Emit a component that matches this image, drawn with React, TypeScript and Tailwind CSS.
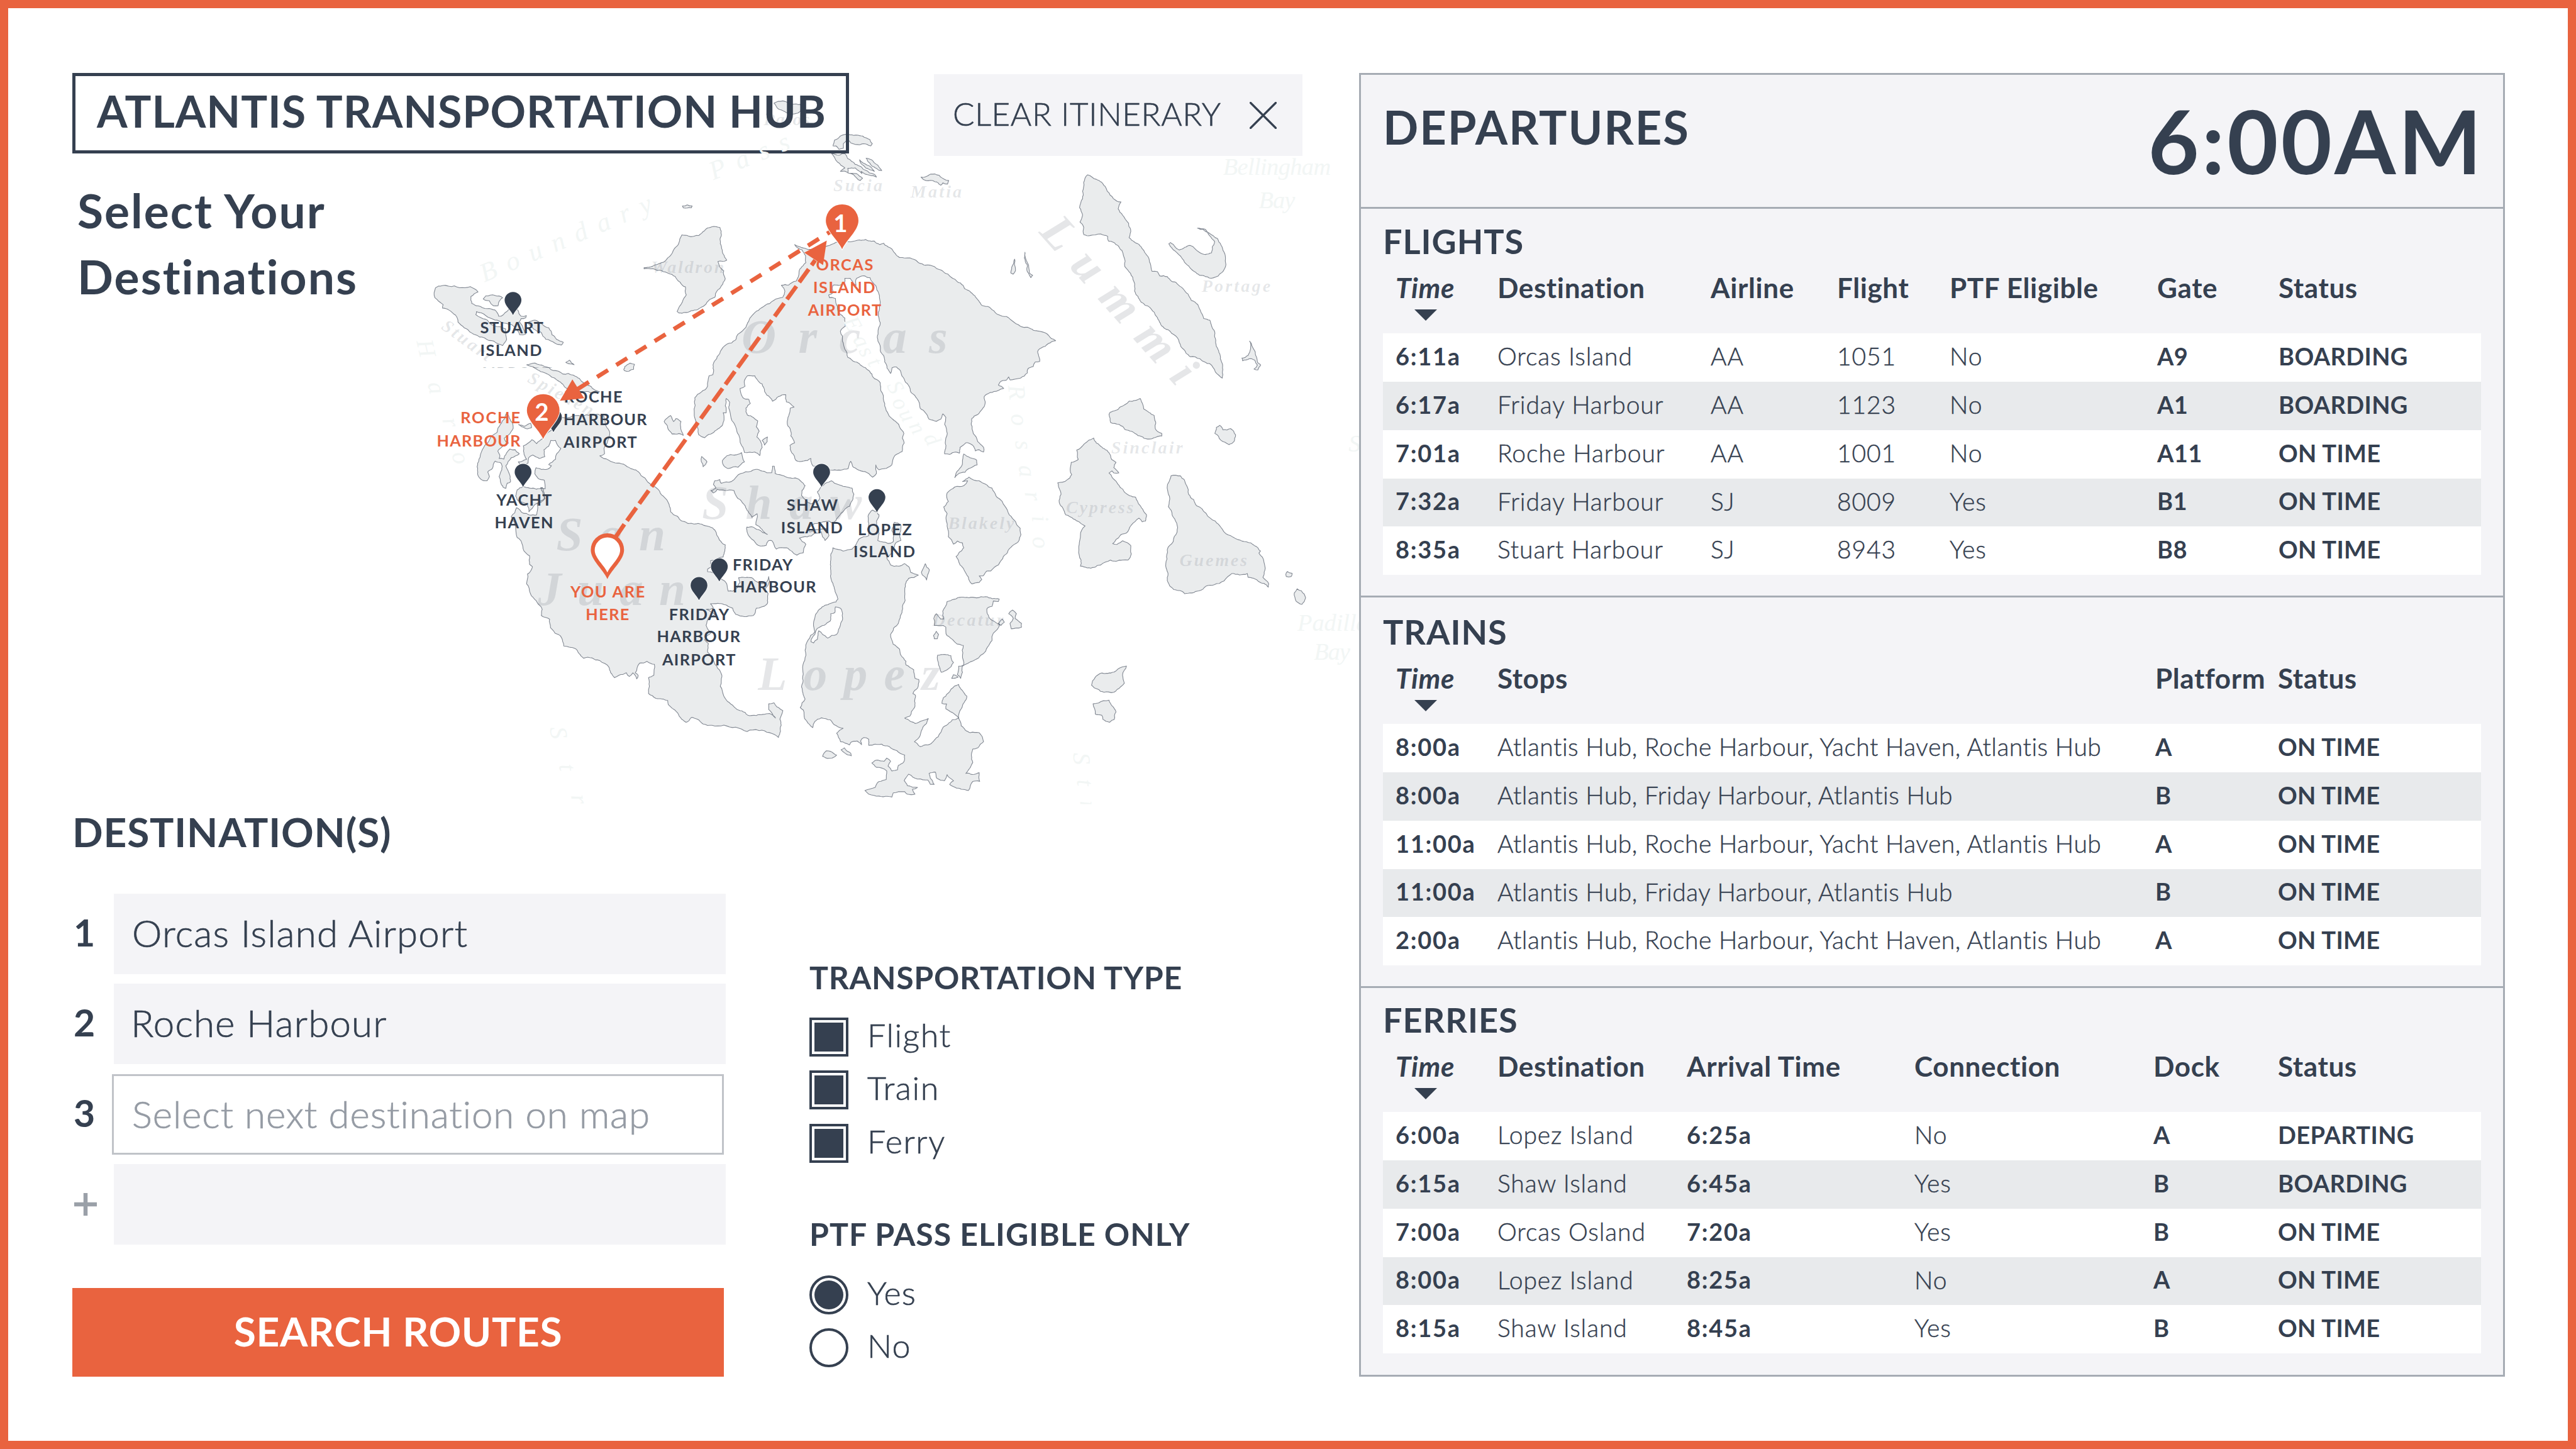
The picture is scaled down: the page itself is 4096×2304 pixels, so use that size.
import React from "react";

/* ------------------------------------------------------------------ */
/* Map geometry                                                        */
/* ------------------------------------------------------------------ */

type Sheet = { x: number; y: number; sx: number; sy: number; shapes: string[] };

// Coastlines are stored per chart sheet; each sheet has its own origin and scale.
const SHEETS: Sheet[] = [
  {
    x: 1000, y: 300, sx: 0.7653, sy: 0.57398,
    shapes: [
      "107,722 150,715 220,717 245,740 222,760 225,790 245,800 275,812 300,818 312,845 320,845 345,815 372,815 380,838 385,845 402,842 400,852 385,855 378,870 390,890 400,922 380,925 372,905 355,882 330,875 300,862 270,842 240,825 238,838 270,858 290,882 335,900 335,925 338,945 325,972 312,965 280,950 250,935 225,918 200,895 180,870 172,840 150,818 130,810 132,795 105,765",
      "262,770 270,757 300,755 325,765 312,785 310,800 295,800 282,778",
      "410,870 430,862 450,875 475,895 485,925 500,945 522,958 515,970 495,962 465,945 450,915 425,900 410,880",
      "403,1055 430,1048 460,1062 490,1080 520,1095 555,1100 590,1135 625,1165 640,1172 590,1172 560,1168 530,1155 500,1120 470,1095 430,1070",
      "530,1045 542,1035 557,1055 545,1052",
      "718,1075 722,1062 738,1048 753,1053 750,1075 735,1083 720,1080",
    ],
  },
  {
    x: 1600, y: 250, sx: 0.73342, sy: 0.57398,
    shapes: [
      "510,622 540,637 580,637 620,628 650,612 672,607 700,610 730,602 750,600 760,606 780,607 798,622 812,616 826,632 840,642 865,678 885,680 915,686 960,710 990,725 1010,735 1045,768 1080,798 1085,812 1120,843 1145,886 1170,893 1200,925 1250,955 1300,980 1340,997 1370,1015 1394,1038 1375,1048 1340,1073 1333,1085 1338,1110 1340,1128 1325,1130 1318,1150 1300,1160 1298,1178 1275,1200 1240,1208 1235,1195 1228,1208 1205,1218 1200,1230 1218,1245 1185,1258 1160,1270 1152,1280 1155,1310 1145,1335 1110,1375 1108,1400 1115,1440 1130,1475 1150,1500 1150,1520 1135,1510 1122,1515 1112,1490 1090,1480 1070,1500 1068,1525 1055,1520 1035,1530 1018,1528 1020,1480 1027,1440 1018,1400 1022,1370 1012,1355 1005,1378 990,1387 965,1378 935,1330 925,1290 895,1230 870,1175 855,1152 840,1155 835,1180 815,1130 800,1080 792,1040 795,980 800,960 793,930 800,870 785,800 765,765 745,757 720,768 718,800 705,780 698,768 680,768 678,790 640,798 640,830 625,840 628,852 648,855 655,890 662,920 680,940 682,975 665,998 672,1040 680,1075 690,1110 715,1130 750,1155 775,1195 800,1220 802,1255 812,1300 820,1340 835,1370 865,1410 880,1440 875,1460 881,1481 874,1518 850,1534 839,1576 813,1592 796,1597 785,1576 787,1613 774,1629 761,1613 735,1602 709,1586 700,1560 691,1592 639,1599 573,1581 565,1548 515,1557 500,1523 494,1491 510,1480 497,1450 495,1420 485,1395 495,1330 508,1325 495,1310 482,1303 480,1272 455,1280 435,1300 405,1240 400,1225 388,1215 375,1190 350,1190 340,1210 342,1235 325,1245 335,1285 355,1292 360,1310 345,1330 350,1360 370,1370 385,1385 380,1410 390,1430 382,1455 395,1475 400,1500 392,1535 375,1520 340,1522 335,1500 325,1470 310,1410 295,1375 287,1330 290,1305 278,1288 275,1320 278,1350 268,1350 265,1405 245,1425 205,1458 185,1445 175,1400 170,1350 172,1285 215,1235 220,1190 233,1185 237,1130 258,1085 310,1035 318,1010 345,980 365,930 410,885 470,850 477,825 465,798 490,797 515,780 525,740 548,700 547,670 535,645",
      "0,722 45,708 80,680 110,630 128,580 150,585 185,583 215,550 257,548 262,580 262,630 280,690 250,695 255,715 270,735 275,770 262,800 240,850 200,890 160,908 118,918 112,912 130,870 143,840 140,805 105,760 60,735 0,727",
      "130,455 146,450 163,455 160,463 133,463",
      "440,10 455,35 490,58 530,45 530,15 500,15 470,0",
      "640,195 645,170 665,152 700,147 740,152 765,168 773,185 768,195 755,188 730,190 700,182 688,168 675,185 675,205 660,210 650,195",
      "635,228 660,235 680,228 690,250 715,275 750,300 780,318 787,330 765,322 735,305 738,315 715,290 690,292 690,312 720,315 740,335 732,345 710,320 665,305 680,290 655,265 645,245",
      "752,248 775,260 805,302 795,300 765,270",
      "730,255 755,278 780,305 750,290 735,272",
      "938,330 960,325 970,317 1000,322 1015,338 1032,345 1028,360 1012,355 1005,365 985,350 955,345",
      "1255,685 1245,720 1242,745 1250,750 1258,735 1255,700",
      "1290,655 1288,680 1298,740 1310,765 1316,755 1305,745 1298,700",
      "68,1388 90,1362 100,1388 108,1375 125,1388 133,1448 118,1440 95,1442 80,1415",
      "400,1470 418,1455 417,1475 408,1490",
    ],
  },
  {
    x: 1180, y: 700, sx: 0.33333, sy: 0.33333,
    shapes: [
      "235,980 260,1020 280,1050 285,1090 250,1140 218,1165 230,1190 250,1200 220,1215 190,1240 170,1260 185,1290 180,1315 215,1320 235,1275 260,1245 300,1250 330,1280 270,1310 230,1370 260,1440 265,1490 240,1500 230,1538 210,1530 190,1490 180,1450 200,1400 195,1350 150,1335 130,1390 95,1415 108,1450 90,1482 60,1480 30,1455 20,1350 40,1290 75,1215 120,1150 165,1120 190,1060 220,1020",
      "325,1062 370,1075 415,1053 422,1085 390,1095 350,1080",
    ],
  },
  {
    x: 1050, y: 1050, sx: 0.73342, sy: 0.60587,
    shapes: [
      "434,72 450,72 468,105 450,149 427,171 436,176 423,190 384,184 380,209 391,228 412,235 415,270 400,265 412,310 388,330 385,378 340,370 318,348 300,385 315,430 320,470 335,490 340,515 362,545 362,580 372,590 355,620 352,660 365,700 385,730 405,765 402,790 430,805 433,840 448,862 470,880 478,915 515,925 545,965 600,975 630,1000 650,1045 665,1035 690,1025 700,1040 712,1025 725,1050 730,1035 720,1025 735,985 760,978 785,990 783,1035 765,1045 768,1080 765,1110 790,1130 830,1138 832,1155 860,1185 892,1228 910,1208 930,1215 950,1235 980,1240 1060,1248 1140,1262 1205,1290 1212,1265 1210,1215 1220,1180 1200,1165 1190,1148 1172,1152 1172,1175 1195,1210 1175,1192 1130,1200 1100,1198 1060,1170 1020,1120 1008,1080 1012,1030 990,990 965,940 968,905 955,890 978,860 960,830 968,800 990,785 960,765 985,760 975,742 1000,740 1020,745 1050,760 1060,785 1120,790 1130,760 1165,745 1170,700 1160,680 1175,650 1172,630 1160,660 1130,650 1115,635 1070,635 1075,655 1050,690 1035,690 1030,660 1010,640 1000,625 965,610 965,600 980,590 975,565 1000,555 1018,550 1025,500 1005,480 990,440 970,425 920,415 880,403 840,365 835,335 815,300 775,255 730,200 712,190 660,165 600,135 616,127 616,99 629,66 632,33 618,5 614,-27 591,-36 554,-33 518,-30 495,-22 473,-22 432,33 409,63 386,85 370,69 341,94 352,149 324,160 330,172 357,165 359,143 373,132 395,146 414,138 411,110 427,96",
      "315,300 320,275 340,262 385,272 405,265 415,310 380,335 360,365 355,335 320,315",
      "945,138 963,160 950,180",
      "1015,155 1030,135 1080,122 1090,160 1068,182 1035,187 1018,172",
    ],
  },
  {
    x: 1750, y: 1100, sx: 0.63776, sy: 0.60587,
    shapes: [
      "40,155 60,150 65,165 105,158 125,138 160,118 200,108 225,115 262,122 265,95 272,95 275,125 310,135 360,145 385,165 392,175 380,195 378,215 395,235 415,250 440,240 450,225 440,200 456,178 485,160 495,155 520,170 575,185 582,210 565,260 545,275 520,305 500,330 485,320 440,330 420,335 405,350 410,365 450,355 475,350 485,380 470,400 460,385 455,365 430,370 400,385 370,390 395,415 385,450 360,460 320,430 280,435 262,400 250,400 240,420 210,420 185,395 168,370 165,345 190,345 210,355 245,375 225,355 200,335 205,290 185,305 170,280 145,240 120,210 115,195 80,195 50,190 35,205 25,195 45,185 35,170",
      "500,430 540,443 575,435 600,395 640,380 640,330 637,300 655,275 672,284 680,295 670,320 680,370 675,400 715,412 735,405 730,360 740,325 765,335 760,370 765,400 745,410 735,440 710,470 725,500 755,505 780,495 798,510 803,530 833,542 795,555 780,610 772,680 755,740 725,785 735,825 760,845 765,870 785,895 785,910 815,930 820,965 835,970 830,1005 812,1028 822,1035 818,1085 800,1120 780,1128 800,1140 820,1150 850,1138 872,1130 865,1150 845,1180 840,1200 818,1225 840,1245 870,1238 910,1205 930,1165 965,1135 990,1128 1000,1160 1035,1188 1070,1188 1087,1225 1065,1250 1045,1255 1045,1310 1018,1355 1070,1352 1072,1388 1045,1388 1028,1425 1000,1420 955,1400 970,1385 945,1360 935,1385 905,1375 900,1350 875,1355 880,1375 895,1400 880,1400 870,1382 830,1378 795,1358 778,1385 790,1405 830,1412 810,1420 820,1440 790,1440 780,1430 755,1430 735,1435 730,1452 680,1448 640,1440 625,1425 665,1412 680,1388 708,1380 710,1345 670,1330 652,1312 675,1300 700,1305 710,1292 725,1305 715,1325 730,1345 752,1340 755,1322 775,1310 780,1280 750,1262 720,1245 690,1235 640,1240 640,1215 620,1208 608,1222 612,1237 595,1222 570,1228 565,1238 530,1225 515,1190 540,1170 505,1155 490,1135 455,1127 430,1142 422,1167 390,1130 385,1095 373,1085 392,1050 378,1000 383,930 392,850 430,775 432,705 470,665 512,652 520,640 505,590 492,530 492,480|510,672 530,678 538,700 530,745 515,785 480,800 460,785 445,770 440,805 425,820 415,815 430,785 440,760 490,730 492,700 508,695",
      "1005,158 1030,140 1070,155 1120,185 1160,240 1200,310 1230,350 1225,400 1180,450 1145,500 1115,525 1100,525 1085,545 1070,545 1080,560 1070,572 1042,578 1028,550 1005,510 980,465 1010,430 1005,410 985,402 970,415 950,385 945,340 945,290 932,262 950,240 945,205 975,180 1010,175 1025,155",
      "1010,45 1060,70 1062,90 1015,120 1000,122 975,142 990,110 1005,80",
      "845,530 860,495 876,520 865,562 848,540",
      "928,690 945,650 1000,632 1060,635 1095,630 1148,640 1145,650 1125,648 1120,670 1100,680 1108,715 1150,745 1125,780 1120,810 1085,865 1005,915 998,965 985,950 990,915 1010,910 1008,830 985,825 945,790 940,755 930,748 895,748 893,720 903,700 920,722 932,722",
      "892,790 903,772 912,785 907,803 895,803",
      "908,870 960,872 970,900 945,930 922,940 912,910",
      "963,965 970,950 988,960",
      "1185,700 1200,685 1215,700 1210,720 1235,740 1235,755 1195,762 1190,740 1203,720",
      "1145,740 1160,722 1168,735 1155,748",
      "990,990 1022,1038 1000,1090 990,1128 965,1105 940,1090 943,1070 925,1068 930,1045 960,1010",
      "460,1285 475,1262 492,1265 515,1280 505,1288 470,1290",
      "532,1258 545,1250 570,1272 572,1283 545,1270",
    ],
  },
  {
    x: 2550, y: 350, sx: 0.54209, sy: 1.02041,
    shapes: [
      "280,82 320,93 360,110 370,122 398,140 433,148 420,165 440,180 468,200 477,215 470,235 520,255 555,280 575,317 600,318 610,328 645,330 690,347 740,372 755,388 785,398 790,405 812,432 840,436 848,450 865,480 870,500 888,530 898,560 897,577 865,562 840,542 795,530 750,525 715,505 665,468 630,455 600,430 565,405 525,392 495,365 492,342 450,305 445,280 420,255 375,243 372,232 340,226 290,230 263,228 262,210 245,197 257,180 243,162 257,140 257,122",
      "783,212 820,215 865,235 875,237 905,270 912,305 895,320 855,333 820,330 770,318 720,290 690,272 652,250 660,247 700,265 750,254 790,270 820,276 848,272 862,245 830,222",
      "1022,487 1045,510 1060,540 1073,545 1060,557 1042,555 1058,545 1045,533 1020,530 990,535 987,528 1015,522 1027,505",
      "378,665 383,660 430,647 470,633 522,627 537,652 585,668 590,700 620,712 620,718 570,725 510,717 450,702 425,690 385,685",
      "863,712 870,697 885,692 900,703 935,700 958,715 950,732 928,739 890,728",
      "143,832 185,825 207,812 200,800 205,782 237,775 230,752 265,737 308,723 320,735 345,745 385,765 390,775 410,782 400,795 423,808 400,808 392,803 378,808 410,828 450,855 500,867 520,887 550,910 545,925 530,927 515,918 480,935 455,955 410,970 395,980 415,982 440,973 478,985 480,1005 465,1020 440,1020 410,1023 385,1020 340,1032 278,1039 247,1035 250,1020 240,995 247,960 268,937 215,920 180,910 150,880 158,860",
      "650,832 662,815 705,815 733,838 743,860 780,888 865,925 890,940 968,970 1045,985 1072,998 1065,1003 1088,1025 1092,1045 1083,1062 1110,1078 1108,1086 1062,1072 1015,1062 1012,1053 940,1053 860,1080 790,1095 725,1102 675,1092 645,1070 640,1040 645,995 690,952 688,930 650,890 655,865",
      "1188,1055 1195,1048 1217,1052 1213,1060 1190,1060",
      "1227,1100 1240,1090 1260,1095 1279,1112 1262,1128 1235,1120",
      "298,1325 315,1305 345,1295 400,1293 440,1280 458,1278 440,1300 448,1320 415,1335 400,1342 355,1342",
      "305,1370 330,1368 378,1361 392,1375 410,1390 402,1408 380,1415 350,1408 345,1398 315,1395",
    ],
  },
];

// Deterministic noise so the shoreline always roughens the same way.
function noise(a: number, b: number) {
  const v = Math.sin(a * 12.9898 + b * 78.233) * 43758.5453;
  return (v - Math.floor(v)) * 2 - 1;
}

function roughen(pts: number[][], depth: number): number[][] {
  if (depth === 0) return pts;
  const out: number[][] = [];
  pts.forEach((p, i) => {
    const q = pts[(i + 1) % pts.length];
    const dx = q[0] - p[0];
    const dy = q[1] - p[1];
    out.push(p);
    if (Math.hypot(dx, dy) > 7) {
      const k = noise(p[0] + q[0], p[1] + q[1]) * 0.11;
      out.push([p[0] + dx / 2 - dy * k, p[1] + dy / 2 + dx * k]);
    }
  });
  return roughen(out, depth - 1);
}

function coast(sheet: Sheet, shape: string) {
  return shape
    .split("|")
    .map((ring) => {
      const pts = ring.split(" ").map((p) => {
        const [x, y] = p.split(",").map(Number);
        return [sheet.x + x * sheet.sx, sheet.y + y * sheet.sy];
      });
      return "M" + roughen(pts, 3).map((p) => p[0].toFixed(1) + " " + p[1].toFixed(1)).join("L") + "Z";
    })
    .join("");
}

type Name = [text: string, x: number, y: number, size: number, length: number, angle?: number];

const ISLAND_NAMES: Name[] = [
  ["Orcas", 1842, 876, 119, 512],
  ["San", 1382, 1366, 118, 271],
  ["Juan", 1336, 1503, 118, 367],
  ["Shaw", 1744, 1289, 118, 397],
  ["Lopez", 1883, 1714, 118, 452],
  ["Lummi", 2579, 577, 118, 517, 48.2],
  ["Waldron", 1618, 678, 44, 181],
  ["Sucia", 2070, 475, 44, 122],
  ["Matia", 2262, 490, 44, 127],
  ["Patos", 1897, 310, 44, 115],
  ["Blakely", 2355, 1314, 44, 164],
  ["Decatur", 2316, 1554, 44, 177],
  ["Cypress", 2648, 1274, 44, 168],
  ["Guemes", 2930, 1406, 44, 168],
  ["Sinclair", 2760, 1126, 44, 178],
  ["Portage", 2985, 725, 44, 171],
  ["Stuart", 1094, 815, 44, 142, 36],
  ["Spieden", 1308, 947, 44, 180, 29],
];

const WATER_NAMES: Name[] = [
  ["Boundary", 1203, 701, 66, 458, -23],
  ["Pass", 1772, 447, 66, 210, -22],
  ["Bellingham", 3038, 434, 60, 268],
  ["Bay", 3127, 516, 60, 90],
  ["Padilla", 3223, 1566, 60, 176],
  ["Bay", 3264, 1638, 60, 90],
  ["S", 3350, 1122, 60, 30],
];

// Widely tracked names that follow a channel, one letter at a time.
const CHANNELS: { angle: number; size: number; letters: [string, number, number][] }[] = [
  { angle: 77, size: 60, letters: [["H", 1057, 865], ["a", 1083, 963], ["r", 1119, 1049], ["o", 1143, 1137]] },
  { angle: 82, size: 60, letters: [["S", 1386, 1820], ["t", 1408, 1906], ["r", 1438, 1985]] },
  { angle: 84, size: 60, letters: [["R", 2524, 974], ["o", 2531, 1042], ["s", 2541, 1105], ["a", 2550, 1170], ["r", 2565, 1232], ["i", 2582, 1288], ["o", 2584, 1347]] },
  { angle: 86, size: 60, letters: [["S", 2685, 1884], ["t", 2694, 1944], ["r", 2702, 2000]] },
  { angle: 62, size: 56, letters: [["E", 2117, 804], ["a", 2139, 847], ["s", 2152, 873], ["t", 2172, 899], ["S", 2223, 962], ["o", 2236, 1002], ["u", 2253, 1031], ["n", 2278, 1062], ["d", 2315, 1091]] },
];

type Label = [text: string, x: number, y: number, length: number];

const NAVY_LABELS: Label[] = [
  ["STUART", 1193, 828, 157],
  ["ISLAND", 1193, 884, 153],
  ["ROCHE", 1401, 1000, 145],
  ["HARBOUR", 1400, 1056, 207],
  ["AIRPORT", 1400, 1112, 182],
  ["YACHT", 1233, 1256, 138],
  ["HAVEN", 1229, 1312, 145],
  ["FRIDAY", 1662, 1540, 149],
  ["HARBOUR", 1632, 1595, 207],
  ["AIRPORT", 1645, 1652, 182],
  ["FRIDAY", 1820, 1416, 149],
  ["HARBOUR", 1820, 1472, 207],
  ["SHAW", 1954, 1268, 127],
  ["ISLAND", 1940, 1324, 153],
  ["LOPEZ", 2131, 1329, 134],
  ["ISLAND", 2120, 1384, 153],
];

const ORANGE_LABELS: Label[] = [
  ["ORCAS", 2027, 672, 142],
  ["ISLAND", 2020, 728, 154],
  ["AIRPORT", 2007, 784, 182],
  ["ROCHE", 1144, 1051, 148],
  ["HARBOUR", 1085, 1108, 208],
  ["YOU ARE", 1417, 1484, 185],
  ["HERE", 1455, 1540, 108],
];

const PIN = "M0 0C-11 -24 -40.5 -46 -40.5 -71A40.5 40.5 0 0 1 40.5 -71C40.5 -46 11 -24 0 0Z";

const DARK_PINS: [number, number][] = [
  [1274.5, 782],
  [1375, 1073],
  [1299.5, 1209],
  [1736.5, 1490.5],
  [1787, 1444],
  [2041, 1209],
  [2178.5, 1272],
];

function Names({ items, className }: { items: Name[]; className: string }) {
  return (
    <g className={className}>
      {items.map(([t, x, y, size, len, angle]) => (
        <text key={t + x} fontSize={size} textLength={len} transform={`translate(${x} ${y}) rotate(${angle ?? 0})`}>
          {t}
        </text>
      ))}
    </g>
  );
}

function Labels({ items, className }: { items: Label[]; className: string }) {
  return (
    <g className={className}>
      {items.map(([t, x, y, len]) => (
        <text key={t + x} x={x} y={y} fontSize={39.5} textLength={len}>
          {t}
        </text>
      ))}
    </g>
  );
}

function IslandMap() {
  return (
    <svg
      className="pointer-events-none absolute left-[627px] top-[141px] h-[1136px] w-[1521px]"
      viewBox="1000 240 2376 1775"
      preserveAspectRatio="none"
    >
      <defs>
        <clipPath id="map-edge">
          <rect x="1000" y="240" width="2400" height="1757" />
        </clipPath>
        <clipPath id="label-edge">
          <rect x="1180" y="910" width="200" height="2.5" />
        </clipPath>
      </defs>
      <g clipPath="url(#map-edge)">
        <g className="fill-[#354050]/10 stroke-[#354050]/60" strokeWidth={1.7} strokeLinejoin="round" fillRule="evenodd">
          {SHEETS.map((s) => s.shapes.map((shape) => <path key={shape} d={coast(s, shape)} />))}
        </g>
        <Names items={WATER_NAMES} className="fill-[#f2f6f5] font-['Liberation_Serif',serif] italic" />
        <g className="fill-[#f2f6f5] font-['Liberation_Serif',serif] italic" textAnchor="middle">
          {CHANNELS.map((c) =>
            c.letters.map(([l, x, y]) => (
              <text key={l + x} fontSize={c.size} transform={`translate(${x} ${y}) rotate(${c.angle})`} dy="0.3em">
                {l}
              </text>
            ))
          )}
        </g>
        <Names items={ISLAND_NAMES} className="fill-[#354050]/13 font-['Liberation_Serif',serif] font-bold italic" />
      </g>

      {DARK_PINS.map(([x, y]) => (
        <path key={x} d={PIN} transform={`translate(${x} ${y}) scale(.515)`} className="fill-[#354050] stroke-white" strokeWidth={5} paintOrder="stroke" />
      ))}
      <Labels items={NAVY_LABELS} className="fill-[#354050] font-['Lato',sans-serif] font-bold" />
      <g clipPath="url(#label-edge)">
        <text x={1190} y={939.5} fontSize={39.5} textLength={181} className="fill-[#354050]/70 font-['Lato',sans-serif] font-bold">
          AIRPORT
        </text>
      </g>

      <g className="fill-none stroke-[#e9633f]" strokeWidth={10.5}>
        <path d="M1528 1336L1551 1302" />
        <path d="M1557.5 1293L2025 646" strokeDasharray="40 12.2" />
        <path d="M2068.4 571.5L1430 969" strokeDasharray="32 24.1" strokeDashoffset={16} />
      </g>
      <g className="fill-[#e9633f]">
        <path d="M2053.8 597L1998 627L2044.6 658Z" />
        <path d="M1391 995L1422 942L1451.5 989Z" />
      </g>

      <path d={PIN} transform="translate(2092 618.5)" className="fill-[#e9633f] stroke-white" strokeWidth={3} paintOrder="stroke" />
      <path d={PIN} transform="translate(1349.5 1090)" className="fill-[#e9633f] stroke-white" strokeWidth={3} paintOrder="stroke" />
      <g className="fill-white font-['Lato',sans-serif] font-bold" textAnchor="middle">
        <text x={2088} y={576} fontSize={60}>1</text>
        <text x={1346} y={1044} fontSize={60}>2</text>
      </g>
      <path d={PIN} transform="translate(1509 1438) scale(1.02)" className="fill-[#e9633f]" />
      <path d={PIN} transform="translate(1509 1421.5) scale(.78)" className="fill-white" />
      <Labels items={ORANGE_LABELS} className="fill-[#e9633f] font-['Lato',sans-serif] font-bold" />
    </svg>
  );
}

/* ------------------------------------------------------------------ */
/* Itinerary form                                                      */
/* ------------------------------------------------------------------ */

function DestinationRow({ mark, children }: { mark: React.ReactNode; children?: React.ReactNode }) {
  return (
    <div className="flex h-[128px] items-center">
      <div className="w-[66px] shrink-0 pb-[5px] pl-[2px] text-[59px] font-bold leading-none">{mark}</div>
      {children}
    </div>
  );
}

function DestinationForm() {
  return (
    <div className="w-[1039px]">
      <h2 className="mb-[58px] pt-px text-[64px] font-bold leading-[80px] tracking-[0.013em]">DESTINATION(S)</h2>
      <div className="flex flex-col gap-[15.3px]">
        <DestinationRow mark="1">
          <div className="flex h-full flex-1 items-center bg-[#f4f4f7] pb-[5px] pl-[29px] text-[60px] font-light tracking-[0.02em] [-webkit-text-stroke:0.012em]">
            Orcas Island Airport
          </div>
        </DestinationRow>
        <DestinationRow mark="2">
          <div className="flex h-full flex-1 items-center bg-[#f4f4f7] pb-[5px] pl-[27px] text-[60px] font-light tracking-[0.02em] [-webkit-text-stroke:0.012em]">
            Roche Harbour
          </div>
        </DestinationRow>
        <DestinationRow mark="3">
          <div className="-ml-[3px] mr-[3px] flex h-full flex-1 items-center border-[3px] border-[#c0c3c8] bg-white pb-[2px] pl-[29px] text-[60px] font-light tracking-[0.015em] text-[#959ba4] [-webkit-text-stroke:0.012em]">
            Select next destination on map
          </div>
        </DestinationRow>
        <DestinationRow
          mark={
            <svg className="ml-px mt-[5px] size-[36px] stroke-[#9aa0a8]" viewBox="0 0 36 36" strokeWidth={6.5}>
              <path d="M18 0V36M0 18H36" />
            </svg>
          }
        >
          <div className="h-full flex-1 bg-[#f4f4f7]" />
        </DestinationRow>
      </div>
      <button className="mt-[69px] flex h-[141px] w-[1036px] items-center justify-center bg-[#e9633f] pb-[4px] text-[64px] font-bold tracking-[0.01em] text-white">
        SEARCH ROUTES
      </button>
    </div>
  );
}

function CheckOption({ label }: { label: string }) {
  return (
    <div className="flex h-[62px] items-center gap-[30px]">
      <div className="flex size-[62px] items-center justify-center border-4 border-[#354050]">
        <div className="size-[46px] bg-[#354050]" />
      </div>
      <span className="pb-[8px] text-[52px] font-light leading-none tracking-[0.03em] [-webkit-text-stroke:0.012em]">{label}</span>
    </div>
  );
}

function RadioOption({ label, checked }: { label: string; checked?: boolean }) {
  return (
    <div className="flex h-[62px] items-center gap-[30px]">
      <div className="flex size-[62px] items-center justify-center rounded-full border-4 border-[#354050]">
        {checked && <div className="size-[46px] rounded-full bg-[#354050]" />}
      </div>
      <span className="pb-[8px] text-[52px] font-light leading-none tracking-[0.02em] [-webkit-text-stroke:0.012em]">{label}</span>
    </div>
  );
}

function Filters() {
  return (
    <div className="mb-[15px] ml-[133px]">
      <h3 className="text-[50px] font-bold leading-[60px] tracking-[0.014em]">TRANSPORTATION TYPE</h3>
      <div className="mt-[34px] flex flex-col gap-[22.5px]">
        <CheckOption label="Flight" />
        <CheckOption label="Train" />
        <CheckOption label="Ferry" />
      </div>
      <h3 className="mt-[83px] text-[50px] font-bold leading-[60px] tracking-[0.02em]">PTF PASS ELIGIBLE ONLY</h3>
      <div className="mt-[36px] flex flex-col gap-[22.5px]">
        <RadioOption label="Yes" checked />
        <RadioOption label="No" />
      </div>
    </div>
  );
}

/* ------------------------------------------------------------------ */
/* Departures board                                                    */
/* ------------------------------------------------------------------ */

type Kind = "time" | "text" | "stops" | "strong";
type Column = { title: string; kind: Kind };

const CELL: Record<Kind, string> = {
  time: "text-[38px] font-bold tracking-[0.045em]",
  text: "text-[39px] font-light tracking-[0.023em] [-webkit-text-stroke:0.012em]",
  stops: "text-[39px] font-light tracking-[0.013em] [-webkit-text-stroke:0.012em]",
  strong: "text-[38px] font-bold tracking-[0.01em]",
};

function Board({ title, height, grid, columns, rows, last }: { title: string; height: string; grid: string; columns: Column[]; rows: string[][]; last?: boolean }) {
  return (
    <section className={`flex flex-col justify-end px-[35px] ${height} ${last ? "pb-[34px]" : "border-b-[3px] border-[#a6acb4] pb-[33px]"}`}>
      <h3 className="mb-[14px] text-[54px] font-bold leading-[64px] tracking-[0.018em]">{title}</h3>
      <div className={`grid h-[100px] pl-[20px] text-[44px] font-bold leading-[54px] tracking-[0.014em] ${grid}`}>
        {columns.map((c, i) =>
          i === 0 ? (
            <div key={c.title}>
              <div className="italic">{c.title}</div>
              <svg className="ml-[30px] mt-[8px] h-[18px] w-[36px] fill-[#354050]" viewBox="0 0 36 18">
                <path d="M0 0H36L18 18Z" />
              </svg>
            </div>
          ) : (
            <div key={c.title} className="whitespace-nowrap">
              {c.title}
            </div>
          )
        )}
      </div>
      {rows.map((r, i) => (
        <div key={i} className={`grid h-[76.75px] items-center whitespace-nowrap pb-[4px] pl-[20px] ${grid} ${i % 2 ? "bg-[#e8eaec]" : "bg-white"}`}>
          {r.map((cell, j) => (
            <div key={j} className={CELL[columns[j].kind]}>
              {cell}
            </div>
          ))}
        </div>
      ))}
    </section>
  );
}

const FLIGHT_COLUMNS: Column[] = [
  { title: "Time", kind: "time" },
  { title: "Destination", kind: "text" },
  { title: "Airline", kind: "text" },
  { title: "Flight", kind: "text" },
  { title: "PTF Eligible", kind: "text" },
  { title: "Gate", kind: "strong" },
  { title: "Status", kind: "strong" },
];

const FLIGHTS = [
  ["6:11a", "Orcas Island", "AA", "1051", "No", "A9", "BOARDING"],
  ["6:17a", "Friday Harbour", "AA", "1123", "No", "A1", "BOARDING"],
  ["7:01a", "Roche Harbour", "AA", "1001", "No", "A11", "ON TIME"],
  ["7:32a", "Friday Harbour", "SJ", "8009", "Yes", "B1", "ON TIME"],
  ["8:35a", "Stuart Harbour", "SJ", "8943", "Yes", "B8", "ON TIME"],
];

const TRAIN_COLUMNS: Column[] = [
  { title: "Time", kind: "time" },
  { title: "Stops", kind: "stops" },
  { title: "Platform", kind: "strong" },
  { title: "Status", kind: "strong" },
];

const LONG_LINE = "Atlantis Hub, Roche Harbour, Yacht Haven, Atlantis Hub";
const SHORT_LINE = "Atlantis Hub, Friday Harbour, Atlantis Hub";

const TRAINS = [
  ["8:00a", LONG_LINE, "A", "ON TIME"],
  ["8:00a", SHORT_LINE, "B", "ON TIME"],
  ["11:00a", LONG_LINE, "A", "ON TIME"],
  ["11:00a", SHORT_LINE, "B", "ON TIME"],
  ["2:00a", LONG_LINE, "A", "ON TIME"],
];

const FERRY_COLUMNS: Column[] = [
  { title: "Time", kind: "time" },
  { title: "Destination", kind: "text" },
  { title: "Arrival Time", kind: "time" },
  { title: "Connection", kind: "text" },
  { title: "Dock", kind: "strong" },
  { title: "Status", kind: "strong" },
];

const FERRIES = [
  ["6:00a", "Lopez Island", "6:25a", "No", "A", "DEPARTING"],
  ["6:15a", "Shaw Island", "6:45a", "Yes", "B", "BOARDING"],
  ["7:00a", "Orcas Osland", "7:20a", "Yes", "B", "ON TIME"],
  ["8:00a", "Lopez Island", "8:25a", "No", "A", "ON TIME"],
  ["8:15a", "Shaw Island", "8:45a", "Yes", "B", "ON TIME"],
];

function Departures() {
  return (
    <aside className="flex h-[2073px] w-[1822px] flex-col border-[3px] border-[#a6acb4] bg-[#f4f4f7]">
      <header className="flex h-[213px] justify-between border-b-[3px] border-[#a6acb4] pl-[35px] pr-[30px]">
        <h2 className="pt-[38px] text-[74px] font-bold leading-[90px] tracking-[0.026em]">DEPARTURES</h2>
        <div className="pt-[29px] text-[140px] font-bold leading-[150px] tracking-[0.03em]">6:00AM</div>
      </header>
      <Board title="FLIGHTS" height="h-[618px]" grid="grid-cols-[162px_339px_201px_179px_330px_193px_1fr]" columns={FLIGHT_COLUMNS} rows={FLIGHTS} />
      <Board title="TRAINS" height="h-[621px]" grid="grid-cols-[162px_1046px_195px_1fr]" columns={TRAIN_COLUMNS} rows={TRAINS} />
      <Board title="FERRIES" height="h-[615px]" grid="grid-cols-[162px_301px_362px_380px_198px_1fr]" columns={FERRY_COLUMNS} rows={FERRIES} last />
    </aside>
  );
}

export default function App() {
  return (
    <main className="relative flex h-[2304px] w-[4096px] overflow-hidden border-[13px] border-[#e9633f] bg-white pl-[102px] pt-[103px] font-['Lato',sans-serif] text-[#354050]">
      <div className="flex h-[2073px] w-[2046px] flex-col justify-between">
        <div>
          <div className="flex h-[132px] items-start">
            <h1 className="flex h-[128px] w-[1235px] items-center border-[5px] border-[#354050] pb-[8px] pl-[34px] text-[70px] font-bold tracking-[0.013em]">
              ATLANTIS TRANSPORTATION HUB
            </h1>
            <button className="ml-[135px] mt-[2px] flex h-[130px] w-[586px] items-center bg-[#f4f4f7] pl-[30px] text-[51px] font-light tracking-[0.013em] [-webkit-text-stroke:0.012em]">
              <span className="w-[472px] pb-[4px] text-left">CLEAR ITINERARY</span>
              <svg className="size-[43px] stroke-[#354050]" viewBox="0 0 43 43" strokeWidth={3.2} strokeLinecap="round">
                <path d="M1.5 1.5L41.5 41.5M41.5 1.5L1.5 41.5" />
              </svg>
            </button>
          </div>
          <p className="ml-[8px] mt-[34px] w-[520px] text-[75px] font-bold leading-[105px] tracking-[0.027em]">Select Your Destinations</p>
        </div>
        <div className="flex items-end">
          <DestinationForm />
          <Filters />
        </div>
      </div>
      <Departures />
      <IslandMap />
    </main>
  );
}
